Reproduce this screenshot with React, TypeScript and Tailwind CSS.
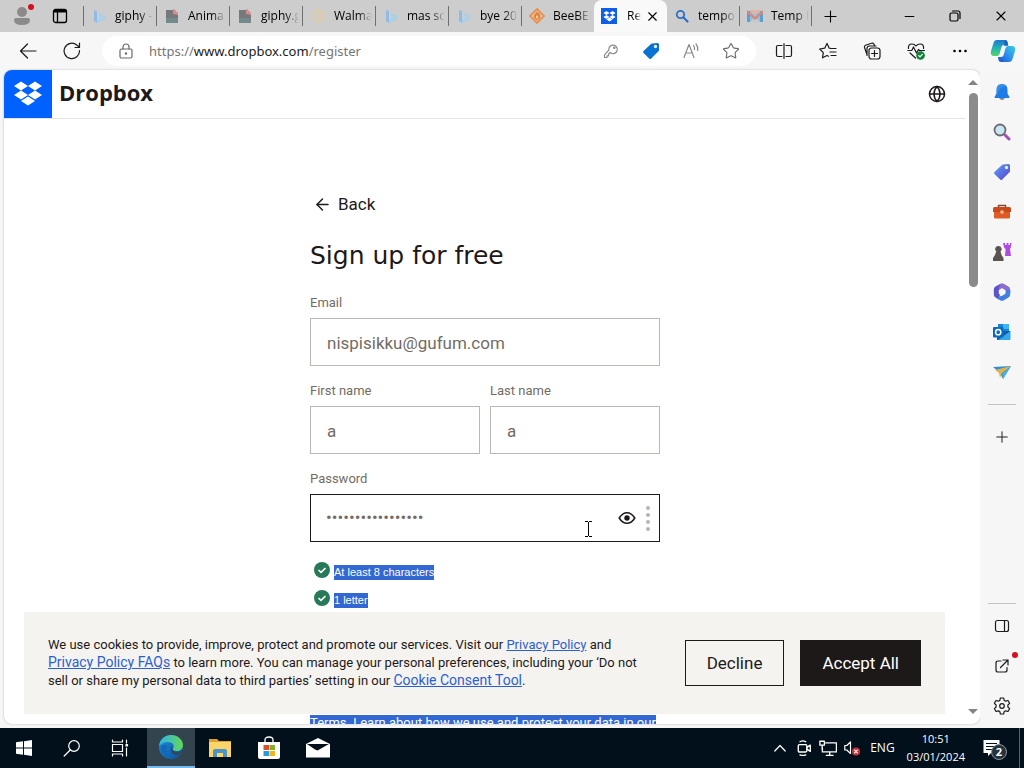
import React from 'react';
import { ArrowLeft, Globe, Minus, Plus, Search, Star, X } from 'lucide-react';

interface Tab {
  id: number;
  title: string;
  icon: React.ReactNode;
  active?: boolean;
}

interface IconProps {
  size?: number;
  box?: number;
  children: React.ReactNode;
}

// Line icon on a square grid
const Line: React.FC<IconProps> = ({ size = 20, box = 20, children }) => (
  <svg
    width={size}
    height={size}
    viewBox={`0 0 ${box} ${box}`}
    fill="none"
    stroke="currentColor"
    strokeWidth="1.2"
    strokeLinecap="round"
    strokeLinejoin="round"
    className="shrink-0"
  >
    {children}
  </svg>
);

// Filled icon on a square grid
const Solid: React.FC<IconProps> = ({ size = 20, box = 20, children }) => (
  <svg width={size} height={size} viewBox={`0 0 ${box} ${box}`} className="shrink-0">
    {children}
  </svg>
);

const DropboxMark: React.FC<{ size: number }> = ({ size }) => (
  <Solid size={size} box={30}>
    <path
      fill="#fff"
      d="M8 2.5 15 7 8 11.5 1 7zM22 2.5 29 7l-7 4.5L15 7zM1 16l7-4.500L15 16l-7 4.500zM22 11.500 29 16l-7 4.500L15 16zM8 22l7-4.500L22 22l-7 4.500z"
    />
  </Solid>
);

const BingIcon = () => (
  <Solid size={16} box={16}>
    <path fill="#8fbbe6" d="m3 2 3 1v8.500l6-2-3-1.400L8 5.500l5.500 2v3.500L6 15l-3-2z" />
    <path fill="#a9d3ea" d="m8 5.500 5.500 2v3.500L6 15v-3.500l4-2z" />
  </Solid>
);

const FileIcon = () => (
  <Solid size={16} box={16}>
    <path fill="#76787a" d="M2 2h8l4 4v9H2z" />
    <path fill="#d58c91" d="M9 1h1l4 4v2L9 6z" />
    <path fill="#6f9694" d="M2 10h12v5H2z" opacity=".6" />
  </Solid>
);

const WalmartIcon = () => (
  <Solid size={16} box={16}>
    <g stroke="#e2cda3" strokeWidth="2.200" strokeLinecap="round">
      <path d="M8 1v4M8 11v4M2 4.500l3.500 2M10.500 9.500l3.500 2M2 11.500l3.500-2M10.500 6.500l3.500-2" />
    </g>
  </Solid>
);

const BeeIcon = () => (
  <Solid size={16} box={16}>
    <path fill="none" stroke="#e8914c" strokeWidth="1.800" d="m8 1 7 7-7 7-7-7z" />
    <path fill="#ef7f2d" d="M8 3.500c3 2.500 4 4 3 6.500l-3 2.500L5 10c-1-2.500 1-4 3-6.500z" />
    <path fill="#f9dfc4" d="m8 7 1.200 2L8 11 6.800 9z" />
  </Solid>
);

const MailTabIcon = () => (
  <Solid size={16} box={16}>
    <path fill="#8fc4dc" d="M0 3h16v11H0z" />
    <path fill="#c9c9c9" d="m3 14 5-5 5 5z" />
    <path fill="#5f9fd0" d="M0 3h3v11H0zM13 3h3v11h-3z" />
    <path fill="#dd8579" d="m0 2 8 7 8-7v3l-8 7-8-7z" />
    <path fill="#e6b3a3" d="m2 2 6 5 6-5z" />
  </Solid>
);

const TagIcon: React.FC<{ from: string; to: string; id: string }> = ({ from, to, id }) => (
  <Solid size={18} box={18}>
    <defs>
      <linearGradient id={id} x1="0" y1="0" x2="1" y2="1">
        <stop offset="0" stopColor={from} />
        <stop offset="1" stopColor={to} />
      </linearGradient>
    </defs>
    <path
      fill={`url(#${id})`}
      d="M10 1.500 15.500 1Q17 1 17 2.500V8q0 .7-.5 1.200l-7.300 7.300q-1 1-2 0L1.500 11q-1-1 0-2L9 2z"
    />
    <circle cx="13.500" cy="4.500" r="1.700" fill="#e4efc0" />
  </Solid>
);

const CopilotIcon = () => (
  <Solid size={26} box={26}>
    <defs>
      <linearGradient id="cop-a" x1="0" y1="0" x2="0" y2="1">
        <stop offset="0" stopColor="#1a76d8" />
        <stop offset=".5" stopColor="#24b3b0" />
        <stop offset="1" stopColor="#54d468" />
      </linearGradient>
      <linearGradient id="cop-b" x1="1" y1="0" x2="0" y2="1">
        <stop offset="0" stopColor="#35d0e8" />
        <stop offset=".6" stopColor="#2b86ea" />
        <stop offset="1" stopColor="#1652c4" />
      </linearGradient>
    </defs>
    <path fill="url(#cop-a)" d="M7 2h8q2 0 2.500 2l.5 3h-4q-2 0-2.500 2l-2 7q-.6 2-2.500 2H4q-4 0-3-5L3.500 5Q4.300 2 7 2z" />
    <path fill="url(#cop-b)" d="M19 24h-8q-2 0-2.500-2L8 19h3q2 0 2.600-2l2-7q.6-2 2.500-2H22q4 0 3 5l-2.500 8q-.8 3-3.500 3z" />
    <path fill="#1450b8" d="M15 2q2 0 2.500 2l.8 4H14l1-6z" opacity=".7" />
  </Solid>
);

const EdgeIcon = () => (
  <Solid size={26} box={26}>
    <defs>
      <linearGradient id="edge-top" x1="0" y1="0" x2="1" y2="0">
        <stop offset="0" stopColor="#2fb4e8" />
        <stop offset="1" stopColor="#63d657" />
      </linearGradient>
      <linearGradient id="edge-low" x1="0" y1="0" x2="1" y2="1">
        <stop offset="0" stopColor="#1d91de" />
        <stop offset="1" stopColor="#0c4f9c" />
      </linearGradient>
    </defs>
    <circle cx="13" cy="13" r="12" fill="url(#edge-low)" />
    <path fill="url(#edge-top)" d="M1 12C2 5 7 1 13 1c7 0 12 5 12 10 0 4-3 6-6 6-3 0-5-1-4-3 2-2 0-6-5-6-4 0-7 2-9 4z" />
    <path fill="#31485a" d="M15 12c-2 3 0 6 4 6 2 0 4-.5 5.500-2-1 3-3 5-6 5-5 0-7-4-5-8z" />
    <path fill="#1267b8" d="M9 12c-2 5 1 11 7 12.500C8 25 3 19 3 14c0-3 3-4 6-2z" />
  </Solid>
);

const tabs: Tab[] = [
  { id: 1, title: 'giphy -', icon: <BingIcon /> },
  { id: 2, title: 'Anima', icon: <FileIcon /> },
  { id: 3, title: 'giphy.g', icon: <FileIcon /> },
  { id: 4, title: 'Walma', icon: <WalmartIcon /> },
  { id: 5, title: 'mas sc', icon: <BingIcon /> },
  { id: 6, title: 'bye 20', icon: <BingIcon /> },
  { id: 7, title: 'BeeBEE', icon: <BeeIcon /> },
  {
    id: 8,
    title: 'Re',
    active: true,
    icon: (
      <span className="flex size-4 shrink-0 items-center justify-center bg-[#0f5ee8]">
        <DropboxMark size={13} />
      </span>
    ),
  },
  {
    id: 9,
    title: 'tempo',
    icon: (
      <Solid size={16} box={16}>
        <circle cx="6.500" cy="6.500" r="3.700" fill="none" stroke="#2d6fc4" strokeWidth="1.800" />
        <path d="m9.500 9.500 4 4" stroke="#2d6fc4" strokeWidth="2.200" strokeLinecap="round" />
      </Solid>
    ),
  },
  { id: 10, title: 'Temp M', icon: <MailTabIcon /> },
];

const TabBar = () => (
  <div className="flex h-8 shrink-0 items-stretch bg-[#cdcdcd] text-black">
    <button aria-label="Profile" className="relative ml-1 flex w-9 items-center justify-center">
      <Solid size={20} box={20}>
        <circle cx="10" cy="6" r="5" fill="#8a8a8a" />
        <path fill="#8a8a8a" d="M2 14q0-2 2-2h12q2 0 2 2 0 5-8 5t-8-5z" />
      </Solid>
      <span className="absolute top-1 right-1.5 size-1.5 rounded-full bg-[#d40f1f]" />
    </button>
    <button aria-label="Workspaces" className="flex w-10 items-center justify-center">
      <svg width="16" height="16" viewBox="0 0 16 16" fill="none" stroke="currentColor" strokeWidth="1.300">
        <rect x="1.500" y="1.500" width="13" height="13" rx="2" />
        <path d="M1.500 3.500h13M5.500 4v10" />
        <path strokeWidth="2.600" d="M2 3h12" />
      </svg>
    </button>
    <div className="ml-[3px] flex min-w-0 items-stretch">
      {tabs.map((tab, i) => (
        <button
          key={tab.id}
          className={
            tab.active
              ? 'flex w-[73px] items-center rounded-t-lg bg-[#f9f9f9] pl-[7px]'
              : i > 7
                ? 'flex w-[72px] items-center'
                : 'flex w-[73px] items-center'
          }
        >
          {!tab.active && (
            <span
              className={
                tabs[i - 1]?.active ? 'mr-1.5 h-5 w-px shrink-0' : 'mr-[7px] h-5 w-px shrink-0 bg-[#6f6f6f]'
              }
            />
          )}
          {tab.icon}
          <span
            className={
              tab.active
                ? 'ml-2.5 mask-r-from-60% text-left whitespace-nowrap'
                : 'ml-2 w-10 shrink-0 mask-r-from-60% mask-r-to-95% text-left whitespace-nowrap'
            }
          >
            {tab.title}
          </span>
          {tab.active && <X size={15} strokeWidth={1.8} className="ml-1 shrink-0" />}
        </button>
      ))}
      <span className="h-5 w-px self-center bg-[#6f6f6f]" />
    </div>
    <button aria-label="New tab" className="flex w-9 items-center justify-center">
      <Plus size={19} strokeWidth={1.4} />
    </button>
    <div className="ml-auto flex">
      <button aria-label="Minimize" className="flex w-[46px] items-center justify-center">
        <Minus size={15} strokeWidth={1.6} />
      </button>
      <button aria-label="Restore" className="flex w-[46px] items-center justify-center">
        <Line size={12} box={12}>
          <rect x="1" y="3" width="8" height="8" rx="1.500" />
          <path d="M3.500 1H9q2 0 2 2v5.500" />
        </Line>
      </button>
      <button aria-label="Close" className="flex w-[46px] items-center justify-center">
        <X size={16} strokeWidth={1.6} />
      </button>
    </div>
  </div>
);

const Toolbar = () => (
  <div className="flex h-[38px] shrink-0 items-center bg-[#f7f7f7] text-[#1b1b1b]">
    <button aria-label="Back" className="ml-1.5 flex w-11 justify-center">
      <Line size={18} box={18}>
        <path d="M17 9H1.500M8.500 2l-7 7 7 7" />
      </Line>
    </button>
    <button aria-label="Refresh" className="flex w-11 justify-center">
      <Line size={18} box={18}>
        <path d="M16.500 8.500A7.700 7.700 0 1 1 14 3.200L16.300 5M16.500 1v4.500h-4.500" />
      </Line>
    </button>
    <div className="ml-2 flex h-[30px] min-w-0 flex-1 items-center rounded-full bg-white pr-[5px] pl-3.5 text-[#8a8a8a]">
      <span className="mr-[13px] flex w-5 justify-center text-[#6b6b6b]">
        <Line size={16} box={16}>
          <rect x="2" y="6" width="12" height="9" rx="1.500" />
          <path d="M5 6V4a3 3 0 0 1 6 0v2" />
          <circle cx="8" cy="10.500" r=".6" fill="currentColor" />
        </Line>
      </span>
      <span className="flex-1 font-['Noto_Sans',sans-serif] text-[13px] leading-5 whitespace-nowrap text-[#757575]">
        https://<span className="text-[#1b1b1b]">www.dropbox.com</span>/register
      </span>
      <button aria-label="Saved passwords" className="flex w-10 justify-center">
        <Line size={16} box={16}>
          <path d="M7 9.500A4.300 4.300 0 1 0 5.800 7.200L1.500 11.800V14.500h2.500V12.800h1.600v-1.700z" />
          <circle cx="11.300" cy="4.700" r=".7" />
        </Line>
      </button>
      <button aria-label="Shopping" className="flex w-10 justify-center">
        <TagIcon id="tag-bar" from="#0a6fd0" to="#0a74d4" />
      </button>
      <button aria-label="Read aloud" className="flex w-10 justify-center">
        <Line size={18} box={18}>
          <path d="M2 15.500 7 2.500l5 13M3.700 11h6.600M11.500 3.500q1.200 1.500 1 4M14 2q2.200 2.500 1.700 6.500" />
        </Line>
      </button>
      <button aria-label="Add to favorites" className="flex w-10 justify-center text-[#6b6b6b]">
        <Star size={18} strokeWidth={1.5} />
      </button>
    </div>
    <div className="ml-1.5 flex">
      <button aria-label="Split screen" className="flex w-11 justify-center">
        <Line size={18} box={18}>
          <path d="M7 3.500H3q-1.500 0-1.500 1.500v8q0 1.500 1.500 1.500h4M11 3.500h4q1.500 0 1.500 1.500v8q0 1.500-1.500 1.500h-4M9 1.500v15" />
        </Line>
      </button>
      <button aria-label="Favorites" className="flex w-11 justify-center">
        <Line size={18} box={18}>
          <path d="m12 6.500-1.700-.3L8 1.500 5.700 6.200l-5 .8 3.600 3.600-.8 5.200L8 13.500l1.500.7M11.500 6.500h5.500M11 10h6M12 13.500h5" />
        </Line>
      </button>
      <button aria-label="Collections" className="flex w-11 justify-center">
        <Line size={18} box={18}>
          <rect x="6" y="6" width="11" height="11" rx="2.500" />
          <path d="M11.500 8.500v6M8.500 11.500h6M3.800 12 1.500 5.500Q1 4 2.500 3.300l6-2q1.500-.5 2.300.7l.8 1.500M4 13.500V6.500Q4 4 6.500 4H13" />
        </Line>
      </button>
      <button aria-label="Browser essentials" className="flex w-11 justify-center">
        <Line size={18} box={18}>
          <path d="M1.500 6.500Q1 2 5 2q2.500 0 4 2 1.500-2 4-2 4 0 3.500 4.500M.8 8.500h4L6.500 5l3 6 2-3.500 1 1h5M3 11l5.500 5" />
          <circle cx="13.500" cy="13.500" r="4" fill="#0f8338" stroke="#0f8338" strokeWidth=".6" />
          <path stroke="#fff" d="m11.800 13.600 1.200 1.200 2.300-2.500" />
        </Line>
      </button>
      <button aria-label="Settings and more" className="flex w-11 justify-center">
        <Solid size={18} box={18}>
          <circle cx="3.500" cy="9" r="1.300" />
          <circle cx="9" cy="9" r="1.300" />
          <circle cx="14.500" cy="9" r="1.300" />
        </Solid>
      </button>
    </div>
    <button aria-label="Copilot" className="flex w-[42px] justify-center">
      <CopilotIcon />
    </button>
  </div>
);

const sideApps = [
  {
    label: 'Notifications',
    icon: (
      <Solid size={18} box={18}>
        <path fill="#7b8ea0" d="M6 14h6q-.5 3-3 3t-3-3z" />
        <path fill="#1f7be6" d="M9 1q5.500 0 5.500 6v3.500L16.500 14q.3 1-.7 1H2.200q-1 0-.7-1l2-3.500V7Q3.500 1 9 1z" />
        <path fill="#3f9af0" d="M9 1q3.500 0 5 3-4-1-7 2-2 3-2.500 6l-1-1.500V7Q3.500 1 9 1z" opacity=".6" />
      </Solid>
    ),
  },
  {
    label: 'Search',
    icon: (
      <Solid size={18} box={18}>
        <path stroke="#a04fb4" strokeWidth="3" strokeLinecap="round" d="m12 12 4 4" />
        <circle cx="7" cy="7" r="5.500" fill="#c9e6f5" stroke="#6d6d70" strokeWidth="1.800" />
      </Solid>
    ),
  },
  { label: 'Shopping', icon: <TagIcon id="tag-side" from="#59a4f5" to="#5a3fd0" /> },
  {
    label: 'Tools',
    icon: (
      <Solid size={20} box={20}>
        <path fill="none" stroke="#7d4a37" strokeWidth="1.500" d="M6.500 6V3.500h7V6" />
        <path fill="#c84a1b" d="M1 6.500Q1 5 2.500 5h15Q19 5 19 6.500V10H1z" />
        <path fill="#e05a28" d="M2 10h16v5.500q0 1-1 1H3q-1 0-1-1z" />
        <path fill="#f6c5a0" d="M8.500 8.500h3v3h-3z" />
      </Solid>
    ),
  },
  {
    label: 'Games',
    icon: (
      <Solid size={20} box={20}>
        <path fill="#b04be0" d="M11 1h2v2h1.500V1h2v2H18V1h1.500l-.8 5L18 7l1 7h-6l.6-7-1.300-1z" />
        <path fill="#59544f" d="M6.500 4a3 3 0 0 1 2 5.300L9.500 13l2 3v3H1v-3l2-3 1.300-3.700A3 3 0 0 1 6.500 4z" />
      </Solid>
    ),
  },
  {
    label: 'Microsoft 365',
    icon: (
      <Solid size={20} box={20}>
        <path fill="#5a55c8" d="M8.500 1.700 3.500 4.600Q1.800 5.600 1.800 7.600v5q0 2 1.700 3l3.500 2 1-5.500-1-.8V7.800l5-3z" />
        <path fill="#8d6cd0" d="M8.500 1.700q1.500-.9 3 0l5 2.900q1.700 1 1.700 3V11l-5-2.700L10 6.300 7 7.800V5z" />
        <path fill="#3f7fe0" d="M18.200 8v4.600q0 2-1.700 3l-5 2.800q-1.500.8-3 0l-4-2.300 5.500-2.700 3.500-2V8.300z" />
        <path fill="#f7f7f7" d="m10 6.300 3.200 1.900v3.600L10 13.700l-3.200-1.900V8.200z" />
      </Solid>
    ),
  },
  {
    label: 'Outlook',
    icon: (
      <Solid size={20} box={20}>
        <path fill="#1785d8" d="M6 2h11v8H6z" />
        <path fill="#3cb6f0" d="M11 2h6v5h-6z" />
        <path fill="#0f5cb0" d="M5 9h13v9H5z" />
        <path fill="#35a8ea" d="M18.500 9v8q0 1-1 1H6z" />
        <rect x="1" y="5" width="10.500" height="10.500" rx="1" fill="#0b6abf" />
        <circle cx="6.200" cy="10.200" r="2.600" fill="none" stroke="#fff" strokeWidth="1.500" />
      </Solid>
    ),
  },
  {
    label: 'Drop',
    icon: (
      <Solid size={20} box={20}>
        <path fill="#2d8fd8" d="m1 5 18-1-8 13-3-6z" />
        <path fill="#e0b44a" d="m3 8 16-4-9 7-2 5-1-5z" />
        <path fill="#46b2ec" d="m19 4-8.500 7.500L11 17z" />
      </Solid>
    ),
  },
];

const SideBar = () => (
  <aside className="flex w-11 shrink-0 flex-col items-center bg-[#f6f6f6] pt-0.5 text-[#1b1b1b]">
    {sideApps.map((app) => (
      <button key={app.label} aria-label={app.label} className="flex h-10 w-10 items-center justify-center">
        {app.icon}
      </button>
    ))}
    <span className="mt-3 h-px w-7 bg-[#c4c4c4]" />
    <button aria-label="Customize" className="mt-3 flex h-10 w-10 items-center justify-center">
      <Plus size={18} strokeWidth={1.3} />
    </button>
    <div className="mt-auto flex flex-col items-center pb-0.5">
      <span className="mb-0.5 h-px w-7 bg-[#c4c4c4]" />
      <button aria-label="Hide sidebar" className="flex h-10 w-10 items-center justify-center">
        <Line size={16} box={16}>
          <rect x="1.500" y="2.500" width="13" height="11" rx="2" />
          <path d="M10.500 2.500v11" />
        </Line>
      </button>
      <button aria-label="Open link externally" className="relative flex h-10 w-10 items-center justify-center">
        <Line size={16} box={16}>
          <path d="M7 3H4Q2 3 2 5v7q0 2 2 2h7q2 0 2-2V9.500M9 2h5v5M14 2 6.500 9.500" />
        </Line>
        <span className="absolute top-1.5 right-1 size-1.5 rounded-full bg-[#d40f1f]" />
      </button>
      <button aria-label="Settings" className="flex h-10 w-10 items-center justify-center">
        <Line size={18} box={18}>
          <path d="M7.400 1h3.200l.6 2.400 1.400.8 2.400-.7 1.600 2.800L14.900 8v2l1.700 1.700-1.600 2.800-2.400-.7-1.400.8-.6 2.400H7.400l-.6-2.400-1.400-.8-2.400.7-1.600-2.800L3.100 10V8L1.400 6.300 3 3.500l2.400.7 1.400-.8z" />
          <circle cx="9" cy="9" r="2.300" />
        </Line>
      </button>
    </div>
  </aside>
);

const CheckItem: React.FC<{ text: string }> = ({ text }) => (
  <li className="flex h-7 items-center pl-1">
    <span className="mr-1 mb-1">
      <Solid size={16} box={16}>
        <circle cx="8" cy="8" r="8" fill="#267a58" />
        <path fill="none" stroke="#fff" strokeWidth="1.600" d="m4.500 8 2.500 2.300 4.500-4.300" />
      </Solid>
    </span>
    <span className="bg-[#3367d1] font-['Liberation_Sans',sans-serif] text-[11px] leading-[15px] text-white">{text}</span>
  </li>
);

const SignUpForm = () => (
  <form className="mx-auto w-full max-w-[350px] pt-[73px] font-[Roboto,sans-serif]">
    <a href="#back" className="flex items-center gap-1.5 pl-[3px] text-[17px] leading-6 text-[#1e1919]">
      <ArrowLeft size={19} strokeWidth={1.8} />
      Back
    </a>
    <h1 className="mt-6 mb-[22px] font-['DejaVu_Sans',sans-serif] text-[25px] leading-8 text-[#1e1919]">
      Sign up for free
    </h1>

    <label htmlFor="email" className="mb-1.5 block text-[13px] leading-[18px] text-[#736c64]">
      Email
    </label>
    <input
      id="email"
      type="email"
      defaultValue="nispisikku@gufum.com"
      className="h-12 w-full border border-[#bbb8b4] bg-white px-4 pt-0.5 text-[17px] text-[#736c64] outline-none"
    />

    <div className="mt-4 flex gap-2.5">
      <div className="min-w-0 flex-1">
        <label htmlFor="first" className="mb-1.5 block text-[13px] leading-[18px] text-[#736c64]">
          First name
        </label>
        <input
          id="first"
          defaultValue="a"
          className="h-12 w-full border border-[#bbb8b4] bg-white px-4 pt-0.5 text-[17px] text-[#736c64] outline-none"
        />
      </div>
      <div className="min-w-0 flex-1">
        <label htmlFor="last" className="mb-1.5 block text-[13px] leading-[18px] text-[#736c64]">
          Last name
        </label>
        <input
          id="last"
          defaultValue="a"
          className="h-12 w-full border border-[#bbb8b4] bg-white px-4 pt-0.5 text-[17px] text-[#736c64] outline-none"
        />
      </div>
    </div>

    <label htmlFor="password" className="mt-4 mb-1.5 block text-[13px] leading-[18px] text-[#736c64]">
      Password
    </label>
    <div className="relative flex h-12 items-center border border-[#1e1919] bg-white pr-[7px] pl-[15px]">
      <input
        id="password"
        type="password"
        defaultValue="aaaaaaaaaaaaaaaaa"
        className="min-w-0 flex-1 bg-transparent pb-0.5 text-[17px] text-[#736c64] outline-none"
      />
      <button type="button" aria-label="Show password" className="text-[#1e1919]">
        <svg width="18" height="18" viewBox="0 0 18 18" fill="none" stroke="currentColor" strokeWidth="1.500">
          <path d="M1.200 9Q4.500 3.700 9 3.700T16.800 9Q13.500 14.300 9 14.300T1.200 9z" />
          <circle cx="9" cy="9" r="2.700" fill="currentColor" stroke="none" />
        </svg>
      </button>
      <svg width="8" height="28" viewBox="0 0 8 28" className="ml-2" fill="#b5b5b5">
        <circle cx="4" cy="4" r="2" />
        <circle cx="4" cy="11" r="2" />
        <circle cx="4" cy="18" r="2" />
        <circle cx="4" cy="25" r="2" />
      </svg>
      {/* text cursor */}
      <svg
        width="7"
        height="16"
        viewBox="0 0 7 16"
        className="absolute right-[67px] bottom-1"
        fill="#000"
        shapeRendering="crispEdges"
      >
        <path d="M0 0h3v1H0zM4 0h3v1H4zM3 1h1v14H3zM0 15h3v1H0zM4 15h3v1H4z" />
      </svg>
    </div>

    <ul className="mt-4">
      <CheckItem text="At least 8 characters" />
      <CheckItem text="1 letter" />
    </ul>
    <p className="mt-24 text-[13px] leading-[26px] whitespace-nowrap">
      <span className="bg-[#3367d1] text-white underline">
        Terms. Learn about how we use and protect your data in our
      </span>
    </p>
  </form>
);

const CookieBanner = () => (
  <section className="absolute right-[21px] bottom-2.5 left-5 flex items-center justify-between bg-[#f5f3f0] p-6 font-[Roboto,sans-serif] text-[#1e1919]">
    <p className="max-w-[590px] text-[13px] leading-[18px]">
      We use cookies to provide, improve, protect and promote our services. Visit our{' '}
      <a href="#privacy" className="text-[#2b5fd0] underline">Privacy Policy</a> and{' '}
      <a href="#faqs" className="text-sm leading-4 text-[#2b5fd0] underline">Privacy Policy FAQs</a> to learn more. You can manage your
      personal preferences, including your ‘Do not sell or share my personal data to third parties’ setting in our{' '}
      <a href="#consent" className="text-sm leading-4 text-[#2b5fd0] underline">Cookie Consent Tool</a>.
    </p>
    <div className="flex shrink-0 gap-4 text-[17px]">
      <button className="h-[46px] border border-[#1e1919] px-[21px]">Decline</button>
      <button className="h-[46px] bg-[#1e1919] px-[22px] text-white">Accept All</button>
    </div>
  </section>
);

const Page = () => (
  <div className="mb-1 ml-1 flex min-w-0 flex-1 overflow-hidden rounded-lg bg-white shadow-[0_0_2px_rgba(0,0,0,0.3)]">
    <div className="relative flex min-w-0 flex-1 flex-col overflow-hidden">
      <header className="flex h-[49px] shrink-0 items-center border-b border-[#e6e6e6] pr-5">
        <a href="#home" className="flex items-center gap-[7px]">
          <span className="flex size-12 items-center justify-center bg-[#0061fe]">
            <DropboxMark size={30} />
          </span>
          <span className="pb-1 font-['Open_Sans',sans-serif] text-[22px] leading-none font-bold text-[#1e1919]">Dropbox</span>
        </a>
        <button aria-label="Language" className="ml-auto text-[#1e1919]">
          <Globe size={18} strokeWidth={2} />
        </button>
      </header>
      <SignUpForm />
      <CookieBanner />
    </div>
    <div className="flex w-3.5 shrink-0 flex-col items-center justify-between py-2.5">
      <div className="flex flex-col items-center gap-2">
        <svg width="10" height="5" viewBox="0 0 10 5" fill="#858585"><path d="m0 5 5-5 5 5z" /></svg>
        <span className="h-[194px] w-[9px] rounded-full bg-[#8b8b8b]" />
      </div>
      <svg width="10" height="5" viewBox="0 0 10 5" fill="#858585"><path d="m0 0 5 5 5-5z" /></svg>
    </div>
  </div>
);

const TaskBar = () => (
  <footer className="flex h-10 shrink-0 items-stretch bg-[#02101c] text-xs text-white">
    <button aria-label="Start" className="flex w-12 items-center justify-center">
      <Solid size={16} box={16}>
        <path fill="#fff" d="m0 2.300 7-1v6.200H0zM8 1.200 16 0v7.500H8zM0 8.500h7v6.200l-7-1zM8 8.500h8V16l-8-1.200z" />
      </Solid>
    </button>
    <button aria-label="Search" className="flex w-12 items-center justify-center">
      <Line size={18} box={18}>
        <circle cx="11" cy="7" r="5.300" />
        <path d="m7.200 11-6 6" />
      </Line>
    </button>
    <button aria-label="Task view" className="flex w-12 items-center justify-center">
      <Line size={18} box={18}>
        <path d="M1.500 1v2h10V1M1.500 17v-2h10v2M1.500 5.500h10v7h-10zM15.500 1v3M15.500 9v8" />
        <path fill="#fff" d="M15 5.500h1.500V7H15z" />
      </Line>
    </button>
    <button aria-label="Microsoft Edge" className="ml-[3px] flex w-12 items-center justify-center border-b-2 border-[#76b9ed] bg-[#33444f]">
      <EdgeIcon />
    </button>
    <button aria-label="File Explorer" className="flex w-[49px] items-center justify-center">
      <svg width="22" height="20" viewBox="0 0 22 20">
        <path fill="#e0a030" d="M0 1h8l2 2h12v16H0z" />
        <path fill="#fbd46a" d="M0 4h22v15H0z" />
        <path fill="#4a94c8" d="M4 19v-6q0-2 2-2h10q2 0 2 2v6h-4v-4H8v4z" />
      </svg>
    </button>
    <button aria-label="Microsoft Store" className="flex w-[49px] items-center justify-center">
      <Solid size={24} box={24}>
        <path fill="none" stroke="#fff" strokeWidth="1.300" d="M8 7V4q0-3 4-3t4 3v3" />
        <path fill="#fff" d="M1 6h22v15q0 2-2 2H3q-2 0-2-2z" />
        <path fill="#d8512e" d="M6.500 9H12v5H6.500z" />
        <path fill="#86ae2b" d="M12.500 9H18v5h-5.500z" />
        <path fill="#2a9bd4" d="M6.500 15H12v5H6.500z" />
        <path fill="#f2b31c" d="M12.500 15H18v5h-5.500z" />
      </Solid>
    </button>
    <button aria-label="Mail" className="flex w-[49px] items-center justify-center">
      <svg width="24" height="20" viewBox="0 0 24 20">
        <path fill="#fff" d="M0 6 12 0l12 6v13.500H0z" />
        <path fill="#02101c" d="M1 6h22L11.500 12.500 20 16 9 11.500z" />
      </svg>
    </button>

    <div className="ml-auto flex items-center">
      <button aria-label="Show hidden icons" className="flex w-6 justify-center">
        <Line size={12} box={12}>
          <path d="m.8 9 5.200-5.500L11.200 9" />
        </Line>
      </button>
      <button aria-label="Meet now" className="flex w-6 justify-center">
        <Line size={16} box={14}>
          <rect x="2" y="4" width="7.500" height="6.500" rx="1" />
          <path d="m9.500 6.500 3-2v5.500l-3-2M3.500 1.500q2.500-1.500 5 0M3.500 13q2.500 1.200 5 0" />
        </Line>
      </button>
      <button aria-label="Network" className="flex w-6 justify-center">
        <Line size={18} box={16}>
          <path d="M6 3.500h9.500v8H3V8M9.500 11.500v3M6.500 14.500h6M.8 2h4v3.500h-4zM2.800 5.500V9" />
        </Line>
      </button>
      <button aria-label="Volume" className="flex w-6 justify-center">
        <Line size={16} box={16}>
          <path d="M.8 5.500h2L6.500 2v11.500l-3.700-3.500h-2z" />
          <circle cx="12" cy="11.500" r="4" fill="#c7343c" stroke="none" />
          <path stroke="#fff" d="m10.600 10.100 2.800 2.800M13.400 10.100l-2.800 2.800" />
        </Line>
      </button>
      <span className="ml-1.5">ENG</span>
      <span className="ml-3 text-center text-[11px] leading-[18px]">
        10:51
        <br />
        03/01/2024
      </span>
      <button aria-label="Notifications" className="relative ml-[18px] flex w-7 items-center">
        <svg width="17" height="17" viewBox="0 0 17 17">
          <path fill="#fff" d="M.5 0h16v13H8l-3 3v-3H.5z" />
          <path stroke="#02101c" strokeWidth="1.200" d="M3 3.500h11M3 6.500h11M3 9.500h8" />
        </svg>
        <span className="absolute top-1 left-2 flex size-4 items-center justify-center rounded-full border border-[#8d949a] bg-[#26323c] text-[11px] leading-none font-bold">
          2
        </span>
      </button>
      <span className="mr-1 ml-2 h-full w-px bg-[#5a646c]" />
    </div>
  </footer>
);

const App: React.FC = () => {
  return (
    <div className="flex h-screen flex-col overflow-hidden bg-[#f6f6f6] font-['Open_Sans','Noto_Sans',sans-serif] text-xs text-[#1b1b1b]">
      <TabBar />
      <Toolbar />
      <main className="flex min-h-0 flex-1">
        <Page />
        <SideBar />
      </main>
      <TaskBar />
    </div>
  );
};

export default App;
